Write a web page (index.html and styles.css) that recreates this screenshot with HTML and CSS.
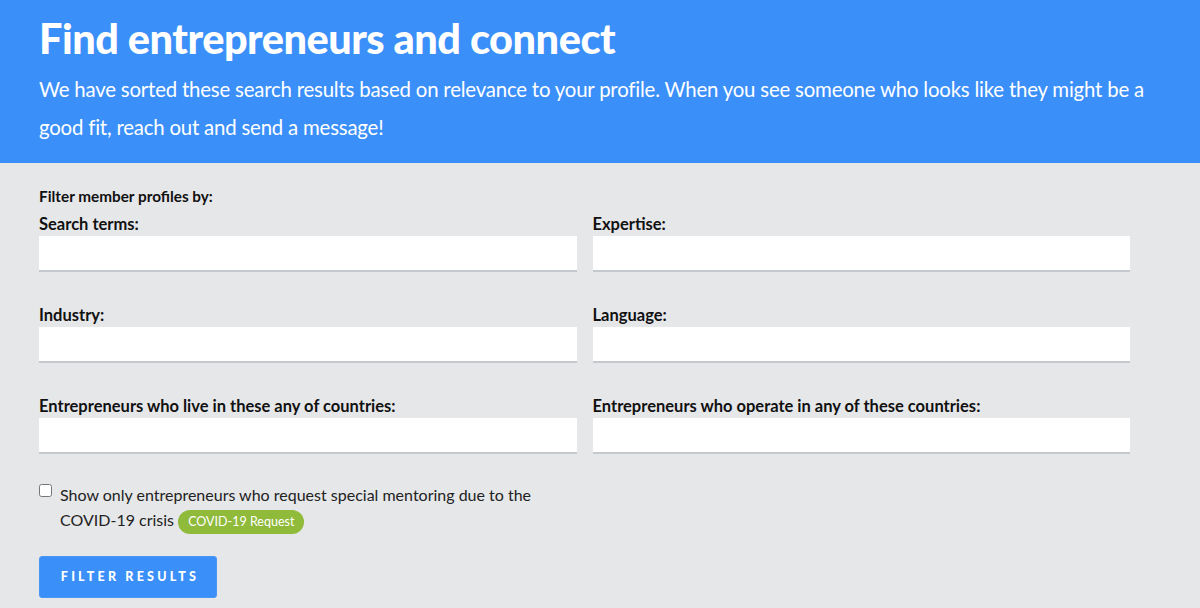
FILE: index.html
```html
<!DOCTYPE html>
<html>
<head>
<meta charset="utf-8">
<link rel="stylesheet" href="styles.css">
</head>
<body>
<header class="hero">
  <h1 class="hero-title">Find entrepreneurs and connect</h1>
  <p class="hero-text">We have sorted these search results based on relevance to your profile. When you see someone who looks like they might be a good fit, reach out and send a message!</p>
</header>
<main class="filters">
  <div class="filters-title">Filter member profiles by:</div>
  <div class="grid">
    <label class="field"><span class="field-label">Search terms:</span><input class="field-input" type="text"></label>
    <label class="field"><span class="field-label">Expertise:</span><input class="field-input" type="text"></label>
    <label class="field"><span class="field-label">Industry:</span><input class="field-input" type="text"></label>
    <label class="field"><span class="field-label">Language:</span><input class="field-input" type="text"></label>
    <label class="field"><span class="field-label">Entrepreneurs who live in these any of countries:</span><input class="field-input" type="text"></label>
    <label class="field"><span class="field-label">Entrepreneurs who operate in any of these countries:</span><input class="field-input" type="text"></label>
  </div>
  <label class="check">
    <input class="check-box" type="checkbox">
    <span class="check-text"><span class="check-copy">Show only entrepreneurs who request special mentoring due to the COVID-19&nbsp;crisis</span> <span class="badge">COVID-19 Request</span></span>
  </label>
  <button class="btn" type="button">FILTER RESULTS</button>
</main>
</body>
</html>
```
FILE: styles.css
```css
html, body {
  margin: 0;
  padding: 0;
}
body {
  background: #e6e7e9;
  font-family: "Lato", "Liberation Sans", sans-serif;
  color: #111;
  width: 1200px;
  height: 608px;
  overflow: hidden;
}
.hero {
  background: #3b8ff9;
  color: #fff;
  padding: 14px 39px 0;
  height: 149px;
}
.hero-title {
  margin: 0;
  font-family: "Lato", sans-serif;
  font-weight: 900;
  font-size: 41.5px;
  line-height: 48px;
  letter-spacing: -0.5px;
}
.hero-text {
  margin: 8px 0 0;
  font-size: 20.4px;
  line-height: 38px;
  font-weight: 400;
  letter-spacing: -0.2px;
}
.filters {
  padding: 23px 70px 0 39px;
}
.filters-title {
  font-weight: 700;
  font-size: 15.3px;
  line-height: 20px;
  margin-bottom: 8px;
}
.grid {
  display: grid;
  grid-template-columns: 1fr 1fr;
  column-gap: 16px;
  row-gap: 33px;
}
.field {
  display: flex;
  flex-direction: column;
  gap: 2px;
}
.field-label {
  font-weight: 700;
  font-size: 16.5px;
  line-height: 20px;
}
.field-input {
  box-sizing: border-box;
  height: 36px;
  border: none;
  border-bottom: 2px solid #c5c8cc;
  background: #fff;
  margin: 0;
  padding: 0 10px;
  font: inherit;
}
.check {
  display: flex;
  align-items: flex-start;
  gap: 8px;
  margin-top: 28px;
  width: 500px;
}
.check-box {
  margin: 2px 0 0;
  width: 13px;
  height: 13px;
}
.check-text {
  font-size: 16px;
  line-height: 25px;
  color: #222;
}
.badge {
  display: inline-block;
  vertical-align: middle;
  background: #8fba3a;
  color: #fff;
  border-radius: 12px;
  font-size: 12.5px;
  line-height: 24px;
  height: 24px;
  padding: 0 10px;
}
.btn {
  display: block;
  margin-top: 22px;
  width: 178px;
  height: 42px;
  background: #3b8ff9;
  border: 1px solid #4a96f5;
  border-radius: 3px;
  color: #fff;
  font-family: "Lato", sans-serif;
  font-weight: 900;
  font-size: 12.5px;
  letter-spacing: 3.2px;
  padding: 0 0 0 4px;
}
```
